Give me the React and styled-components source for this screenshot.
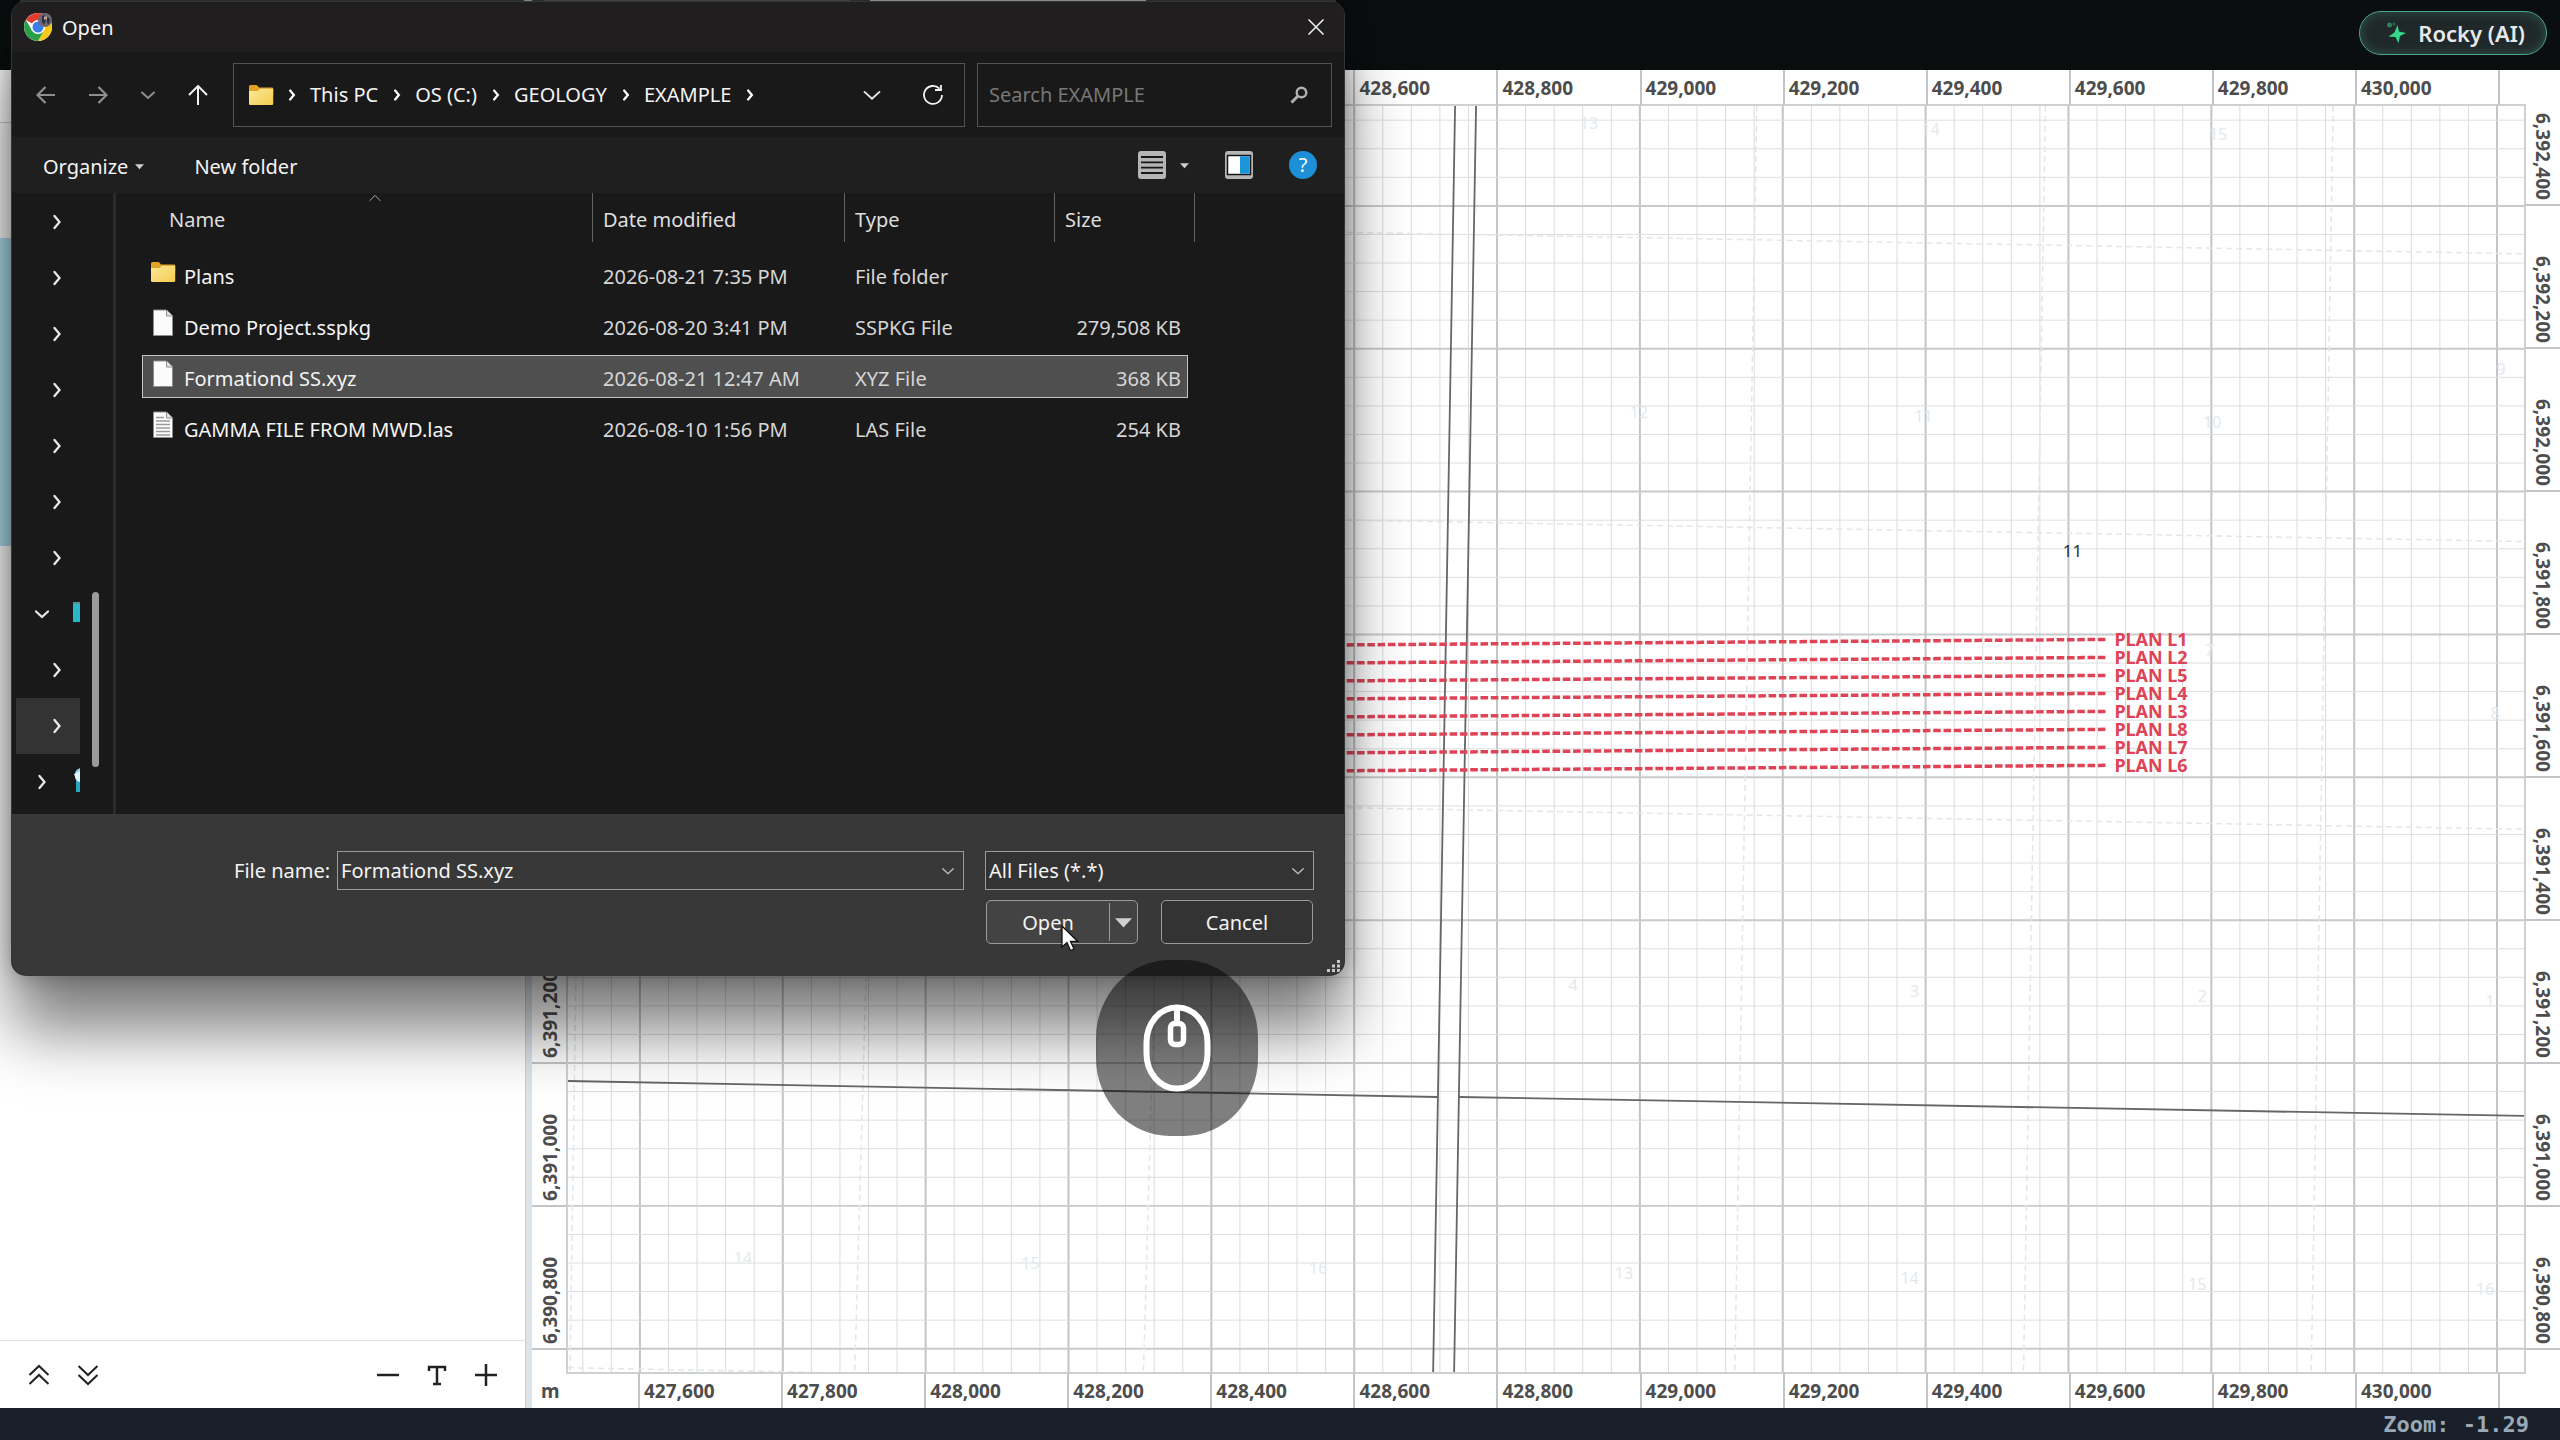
import React, { useState } from "react";
import styled, { createGlobalStyle, css } from "styled-components";

const eastings = ['427,600', '427,800', '428,000', '428,200', '428,400', '428,600', '428,800', '429,000', '429,200', '429,400', '429,600', '429,800', '430,000']
const northings = ['6,392,400', '6,392,200', '6,392,000', '6,391,800', '6,391,600', '6,391,400', '6,391,200', '6,391,000', '6,390,800']

const files = [
    { name: 'Plans', date: '2026-08-21 7:35 PM', type: 'File folder', size: '', icon: 'folder' },
    { name: 'Demo Project.sspkg', date: '2026-08-20 3:41 PM', type: 'SSPKG File', size: '279,508 KB', icon: 'file' },
    { name: 'Formationd SS.xyz', date: '2026-08-21 12:47 AM', type: 'XYZ File', size: '368 KB', icon: 'file' },
    { name: 'GAMMA FILE FROM MWD.las', date: '2026-08-10 1:56 PM', type: 'LAS File', size: '254 KB', icon: 'text' },
]

const treeRows = [
    {}, {}, {}, {}, {}, {}, {},
    { root: true, open: true, icon: 'pc' },
    {},
    { selected: true },
    { root: true, icon: 'network' },
]

const plans = ['L1', 'L2', 'L5', 'L4', 'L3', 'L8', 'L7', 'L6']

// section numbers, in plot coordinates
const sections = [
    ['13', 1022, 17], ['14', 1364, 23], ['15', 1652, 28],
    ['12', 1072, 306], ['11', 1357, 310], ['10', 1646, 316], ['9', 1935, 263],
    ['7', 1643, 545], ['8', 1929, 608],
    ['4', 1006, 880], ['3', 1348, 886], ['2', 1636, 891], ['1', 1924, 896],
    ['14', 175, 1153], ['15', 463, 1158], ['16', 751, 1163], ['13', 1057, 1168],
    ['14', 1343, 1173], ['15', 1631, 1179], ['16', 1919, 1184],
]

const faintLines = [
    [1190, 0, 1168, 1269], [1479, 0, 1457, 1269], [1767, 0, 1745, 1269],
    [306, 600, 287, 1269], [595, 600, 576, 1269], [12, 600, 2, 1269],
    [700, 125, 1958, 148], [700, 413, 1958, 436], [700, 701, 1958, 724],
    [0, 1263, 800, 1278],
]

const roadLines = [
    [888, 0, 866, 1269], [909, 0, 887, 1269],
    [0, 976, 870, 992], [892, 992, 1958, 1011],
]

const STEP = 143

function FolderIcon() {
    return (
        <svg width="26" height="22" viewBox="0 0 26 22">
            <path d="M1 2.5Q1 1 2.5 1H8q1 0 1.600.8L11 3.500H24q1.200 0 1.200 1.200V12H1z" fill="#e0a326" />
            <defs>
                <linearGradient id="folder" x1="0" y1="0" x2="1" y2="1">
                    <stop offset="0" stopColor="#fde79a" />
                    <stop offset="1" stopColor="#f3cd4d" />
                </linearGradient>
            </defs>
            <path d="M1 7H9.500L12 4.800H25.200V19.700Q25.200 21 24 21H2.200Q1 21 1 19.700z" fill="url(#folder)" />
        </svg>
    )
}

function FileIcon({ lined }) {
    return (
        <svg width="26" height="28" viewBox="0 0 26 28">
            <path d="M3.500 1H16.500L22.500 7V26.500H3.500z" fill="#fbfbfb" stroke="#8d8d8d" />
            <path d="M16.500 1V7H22.500" fill="#e4e4e4" stroke="#8d8d8d" />
            {lined && <path d="M6 6.500H14M6 10H20M6 13.500H20M6 17H20M6 20.500H20M6 24H20" stroke="#9a9a9a" strokeWidth="1.500" />}
        </svg>
    )
}

function Chevron({ dir = 'right', size = 16, color = '#e8e8e8', weight = 2 }) {
    const paths = {
        right: 'M5.500 2L10.500 8L5.500 14',
        down: 'M2 5.500L8 11L14 5.500',
        up: 'M2 11L8 5L14 11',
    }
    return (
        <svg width={size} height={size} viewBox="0 0 16 16" fill="none" stroke={color} strokeWidth={weight}>
            <path d={paths[dir]} strokeLinecap="round" />
        </svg>
    )
}

function Triangle({ size = 10, color = '#cfcfcf' }) {
    return (
        <svg width={size} height={size} viewBox="0 0 10 10">
            <path d="M0 2.500H10L5 8z" fill={color} />
        </svg>
    )
}

function ChromeIcon() {
    return (
        <svg width="28" height="28" viewBox="0 0 28 28">
            <circle cx="14" cy="14" r="14" fill="#fff" />
            <path d="M14 14L1.900 7A14 14 0 0 1 26.100 7H14z" fill="#e33b2e" />
            <path d="M14 7H26.100A14 14 0 0 1 14 28L20 17.500z" fill="#f9c916" />
            <path d="M14 28A14 14 0 0 1 1.900 7L8 17.500L14 21L20 17.500z" fill="#2b9f48" />
            <circle cx="14" cy="14" r="7" fill="#fff" />
            <circle cx="14" cy="14" r="5.500" fill="#3b7de8" />
            <circle cx="21" cy="7" r="7" fill="#6d6770" />
            <path d="M18 3L21 2L22 6L20 12L18 9zM23 4L26 6L25 11L23 10z" fill="#26304f" />
            <path d="M20 3.500h3v3h-3z" fill="#c9a58e" />
        </svg>
    )
}

function Plot() {
    const lines = []
    for (let i = -2; i <= 66; i++) {
        const x = 72 + i * STEP / 5
        lines.push(<line key={'v' + i} x1={x} x2={x} y1="0" y2="1269" stroke={i % 5 === 0 ? '#c3c4c6' : '#dadbdd'} strokeWidth={i % 5 === 0 ? 2 : 1} />)
    }
    for (let i = -3; i <= 40; i++) {
        const y = 100 + i * STEP / 5
        lines.push(<line key={'h' + i} y1={y} y2={y} x1="0" x2="1958" stroke={i % 5 === 0 ? '#c9cacc' : '#dddedf'} strokeWidth={i % 5 === 0 ? 2 : 1} />)
    }
    return (
        <PlotSvg viewBox="0 0 1958 1269" preserveAspectRatio="xMinYMin slice">
            {lines}
            {faintLines.map(([x1, y1, x2, y2], i) => (
                <line key={i} x1={x1} y1={y1} x2={x2} y2={y2} stroke="#e1e7ea" strokeWidth="1.500" strokeDasharray="6 4" />
            ))}
            {sections.map(([n, x, y]) => (
                <text key={n + x + y} className="faint" x={x} y={y + 6}>{n}</text>
            ))}
            {roadLines.map(([x1, y1, x2, y2], i) => (
                <line key={i} x1={x1} y1={y1} x2={x2} y2={y2} stroke="#66666a" strokeWidth="1.800" />
            ))}
            <text className="section" x="1506" y="451">11</text>
            {plans.map((p, i) => (
                <g key={p}>
                    <line x1="1539" y1={534 + i * 18} x2="0" y2={545 + i * 18} stroke="#de4456" strokeWidth="3.500" strokeDasharray="7.600 2.700" />
                    <text className="plan" x="1548" y={541 + i * 18}>PLAN {p}</text>
                </g>
            ))}
        </PlotSvg>
    )
}

function OpenDialog() {
    const [selected, setSelected] = useState('Formationd SS.xyz')
    const [search, setSearch] = useState('')

    return (
        <Dialog role="dialog" aria-label="Open">
            <TitleBar>
                <ChromeIcon />
                <h1>Open</h1>
                <IconButton aria-label="Close">
                    <svg width="16" height="16" viewBox="0 0 16 16" stroke="#f2f2f2" strokeWidth="1.500"><path d="M0.500 0.500L15.500 15.500M15.500 0.500L0.500 15.500" /></svg>
                </IconButton>
            </TitleBar>

            <NavBar>
                <NavButtons>
                    <IconButton aria-label="Back">
                        <svg width="20" height="20" viewBox="0 0 20 20" fill="none" stroke="#8f8f8f" strokeWidth="2.200"><path d="M19 10H2M9.500 2L1.500 10L9.500 18" /></svg>
                    </IconButton>
                    <IconButton aria-label="Forward">
                        <svg width="20" height="20" viewBox="0 0 20 20" fill="none" stroke="#8f8f8f" strokeWidth="2.200"><path d="M1 10H18M10.500 2L18.500 10L10.500 18" /></svg>
                    </IconButton>
                    <IconButton aria-label="Recent locations"><Chevron dir="down" color="#8f8f8f" /></IconButton>
                    <IconButton aria-label="Up">
                        <svg width="20" height="20" viewBox="0 0 20 20" fill="none" stroke="#f2f2f2" strokeWidth="2"><path d="M10 20V1.500M1 10L10 1L19 10" /></svg>
                    </IconButton>
                </NavButtons>
                <AddressBar>
                    <FolderIcon />
                    {['This PC', 'OS (C:)', 'GEOLOGY', 'EXAMPLE'].map(c => (
                        <React.Fragment key={c}>
                            <Chevron size={12} weight={3} color="#fff" />
                            <Crumb>{c}</Crumb>
                        </React.Fragment>
                    ))}
                    <Chevron size={12} weight={3} color="#fff" />
                    <AddressActions>
                        <IconButton aria-label="Previous locations"><Chevron dir="down" size={20} weight={1.5} /></IconButton>
                        <IconButton aria-label="Refresh">
                            <svg width="22" height="22" viewBox="0 0 22 22" fill="none" stroke="#f2f2f2" strokeWidth="1.800"><path d="M20 11A9 9 0 1 1 17.500 4.700M13 6H19V1" /></svg>
                        </IconButton>
                    </AddressActions>
                </AddressBar>
                <SearchBox>
                    <input type="text" aria-label="Search" placeholder="Search EXAMPLE" value={search} onChange={e => setSearch(e.target.value)} />
                    <svg width="18" height="18" viewBox="0 0 18 18" fill="none" stroke="#b0b0b0"><circle cx="11.500" cy="6.500" r="4.800" strokeWidth="2.400" /><path d="M8 10L1.500 16.500" strokeWidth="3" /></svg>
                </SearchBox>
            </NavBar>

            <Toolbar>
                <ToolButton>Organize <Triangle size={9} /></ToolButton>
                <ToolButton>New folder</ToolButton>
                <ToolIcons>
                    <IconButton aria-label="Change your view">
                        <svg width="28" height="28" viewBox="0 0 28 28"><rect width="28" height="28" rx="3" fill="#b5b5b5" /><path d="M3 6H25M3 11.300H25M3 16.600H25M3 22H25" stroke="#161616" strokeWidth="1.800" /></svg>
                    </IconButton>
                    <IconButton aria-label="More view options"><Triangle size={9} /></IconButton>
                    <IconButton aria-label="Show the preview pane">
                        <svg width="28" height="28" viewBox="0 0 28 28"><rect width="28" height="28" rx="3" fill="#b5b5b5" /><rect x="2.500" y="4.500" width="23" height="19" fill="#fff" stroke="#161616" strokeWidth="1.500" /><path d="M15 5.300H24.800V22.800H15z" fill="#1c95d8" /></svg>
                    </IconButton>
                    <HelpButton aria-label="Help">?</HelpButton>
                </ToolIcons>
            </Toolbar>

            <DialogBody>
                <Tree>
                    <TreeList>
                        {treeRows.map((r, i) => (
                            <TreeRow key={i} $root={r.root} $selected={r.selected}>
                                <Chevron dir={r.open ? 'down' : 'right'} size={16} weight={2.300} />
                                {r.icon === 'pc' && <svg width="7" height="24" viewBox="0 0 7 24"><rect width="7" height="20" fill="#28b7cb" /><rect width="7" height="2" fill="#5e8d96" /></svg>}
                                {r.icon === 'network' && <svg width="8" height="28" viewBox="0 0 8 28"><path d="M8 0A8 8 0 0 0 8 15z" fill="#8fd0ea" /><path d="M4 10H8V24H4z" fill="#2ba7c4" /><path d="M2 6L8 3V14L5 13z" fill="#dff4fb" /></svg>}
                            </TreeRow>
                        ))}
                    </TreeList>
                    <ScrollThumb />
                </Tree>
                <FileTable>
                    <thead>
                        <tr>
                            <th><SortMark><Chevron dir="up" size={14} weight={1} color="#bdbdbd" /></SortMark>Name</th>
                            <th>Date modified</th>
                            <th>Type</th>
                            <th>Size</th>
                        </tr>
                    </thead>
                    <tbody>
                        {files.map(f => (
                            <FileRow key={f.name} $selected={f.name === selected} onClick={() => setSelected(f.name)}>
                                <td>{f.icon === 'folder' ? <FolderIcon /> : <FileIcon lined={f.icon === 'text'} />}{f.name}</td>
                                <td>{f.date}</td>
                                <td>{f.type}</td>
                                <td>{f.size}</td>
                            </FileRow>
                        ))}
                    </tbody>
                </FileTable>
            </DialogBody>

            <DialogFooter>
                <FieldRow>
                    <label htmlFor="filename">File name:</label>
                    <ComboBox>
                        <input id="filename" type="text" value={selected} onChange={e => setSelected(e.target.value)} />
                        <Chevron dir="down" size={14} weight={1.5} color="#c4c4c4" />
                    </ComboBox>
                    <TypeSelect>
                        <select aria-label="File type" defaultValue="all">
                            <option value="all">All Files (*.*)</option>
                        </select>
                        <Chevron dir="down" size={14} weight={1.5} color="#c4c4c4" />
                    </TypeSelect>
                </FieldRow>
                <ButtonRow>
                    <SplitButton>
                        <button>Open</button>
                        <button aria-label="Open options"><Triangle size={17} /></button>
                    </SplitButton>
                    <CancelButton>Cancel</CancelButton>
                </ButtonRow>
                <Grip width="13" height="12" viewBox="0 0 13 12" fill="#c9c9c9"><path d="M10 0h3v3h-3zM5 4.500h3v3h-3zM10 4.500h3v3h-3zM0 9h3v3h-3zM5 9h3v3h-3zM10 9h3v3h-3z" /></Grip>
            </DialogFooter>
        </Dialog>
    )
}

function App() {
    return (
        <Page>
            <GlobalStyle />
            <Header>
                <RockyButton>
                    <svg width="20" height="24" viewBox="0 0 20 24" fill="#35d98d">
                        <path d="M11.500 4L13 10.500L20 12L14 15L12.500 22L9.500 16L2.500 15.500L8.500 11.500z" />
                        <circle cx="3.500" cy="4" r="2.500" opacity="0.500" />
                        <circle cx="8" cy="3" r="1.500" opacity="0.400" />
                    </svg>
                    Rocky (AI)
                </RockyButton>
            </Header>

            <Main>
                <SidePanel>
                    <PanelHead />
                    <PanelTools />
                    <PanelActive />
                    <PanelRest />
                    <PanelFooter>
                        <IconButton aria-label="Collapse all">
                            <svg width="22" height="22" viewBox="0 0 22 22" fill="none" stroke="#222" strokeWidth="2"><path d="M1.500 11L11 2L20.500 11M1.500 20L11 11L20.500 20" /></svg>
                        </IconButton>
                        <IconButton aria-label="Expand all">
                            <svg width="22" height="22" viewBox="0 0 22 22" fill="none" stroke="#222" strokeWidth="2"><path d="M1.500 2L11 11L20.500 2M1.500 11L11 20L20.500 11" /></svg>
                        </IconButton>
                        <Spacer />
                        <IconButton aria-label="Smaller text">
                            <svg width="22" height="22" viewBox="0 0 22 22" stroke="#222" strokeWidth="2.500"><path d="M0 11H22" /></svg>
                        </IconButton>
                        <IconButton aria-label="Text size">
                            <svg width="22" height="22" viewBox="0 0 22 22" fill="none" stroke="#222" strokeWidth="2.500"><path d="M3 7V3H19V7M11 3V20M7 20H15" /></svg>
                        </IconButton>
                        <IconButton aria-label="Larger text">
                            <svg width="22" height="22" viewBox="0 0 22 22" stroke="#222" strokeWidth="2.500"><path d="M0 11H22M11 0V22" /></svg>
                        </IconButton>
                    </PanelFooter>
                </SidePanel>
                <Splitter />
                <MapView>
                    <Ruler>
                        <Ticks>{eastings.map(e => <span key={e}>{e}</span>)}</Ticks>
                    </Ruler>
                    <MapMiddle>
                        <SideRuler $flip>{northings.map(n => <div key={n}><span>{n}</span></div>)}</SideRuler>
                        <PlotArea><Plot /></PlotArea>
                        <SideRuler>{northings.map(n => <div key={n}><span>{n}</span></div>)}</SideRuler>
                    </MapMiddle>
                    <Ruler>
                        <Unit>m</Unit>
                        <Ticks>{eastings.map(e => <span key={e}>{e}</span>)}</Ticks>
                    </Ruler>
                </MapView>
            </Main>

            <StatusBar>Zoom: -1.29</StatusBar>

            <OpenDialog />
            <ClickBadge>
                <svg width="70" height="90" viewBox="0 0 70 90" fill="none" stroke="#fff" strokeWidth="6">
                    <rect x="4.500" y="4.500" width="61" height="81" rx="30" ry="35" />
                    <path d="M35 4V20" />
                    <rect x="28.500" y="20.500" width="13" height="21" rx="4.500" strokeWidth="5.500" />
                </svg>
            </ClickBadge>
            <Pointer width="18" height="27" viewBox="0 0 18 27">
                <path d="M1 1V22L6 17.500L9.500 25.500L13 24L9.500 16.300H16.500z" fill="#fff" stroke="#111" strokeWidth="1.300" />
            </Pointer>
        </Page>
    )
}

export default App

const GlobalStyle = createGlobalStyle`
* { box-sizing: border-box; }
body {
    margin: 0;
    font-family: "Noto Sans", "Open Sans", sans-serif;
}
button, input, select {
    font: inherit;
    color: inherit;
    background: none;
    border: none;
    padding: 0;
    margin: 0;
    outline: none;
}
svg { display: block; flex-shrink: 0; }
`;

const Page = styled.div`
position: relative;
height: 100vh;
display: flex;
flex-direction: column;
background: #fff;
`;

/* the thin strip on top is the bottom edge of the browser tabs */
const Header = styled.header`
display: flex;
justify-content: flex-end;
align-items: flex-start;
height: 70px;
padding: 11px 13px;
background: linear-gradient(90deg, #0a0e0f 20px, #333638 20px 524px, #9aa0a4 524px 532px, #333638 532px 544px, #4b4c50 544px 850px, #333638 850px 870px, #a5a3a3 870px 1146px, #333638 1146px 1336px, #0a0e0f 1336px) 0 0 / 100% 2px no-repeat #0a0e0f;
`;

const RockyButton = styled.button`
display: flex;
align-items: center;
gap: 12px;
height: 44px;
padding: 0 21px 0 26px;
border: 1px solid #4aa784;
border-radius: 22px;
background: #20282a;
box-shadow: inset 0 0 12px rgba(74, 167, 132, 0.35);
color: #e6e9ec;
font-size: 22px;
font-weight: 600;
`;

const Main = styled.main`
flex: 1;
min-height: 0;
display: flex;
`;

const SidePanel = styled.aside`
width: 525px;
display: flex;
flex-direction: column;
background: #fff;
`;

const PanelHead = styled.div`
height: 53px;
border-bottom: 1px solid #c9cdd0;
`;

const PanelTools = styled.div`
height: 115px;
background: #fafafa;
`;

const PanelActive = styled.div`
height: 308px;
background: #aedcec;
`;

const PanelRest = styled.div`
flex: 1;
`;

const PanelFooter = styled.div`
display: flex;
align-items: center;
gap: 27px;
height: 68px;
padding: 0 28px;
border-top: 1px solid #dfe2e5;
`;

const Spacer = styled.div`
flex: 1;
`;

const Splitter = styled.div`
width: 7px;
background: #dde4e8;
border-left: 1px solid #c5d0d5;
`;

const MapView = styled.section`
flex: 1;
min-width: 0;
display: flex;
flex-direction: column;
color: #4d4d4d;
font-size: 19px;
font-weight: 700;
`;

const Ruler = styled.div`
position: relative;
display: flex;
height: 35px;
padding: 0 60px 0 106px;
`;

const Ticks = styled.div`
flex: 1;
display: flex;
border-right: 2px solid #c3c4c6;
span {
    flex: 1;
    padding-left: 4px;
    border-left: 2px solid #c3c4c6;
    line-height: 37px;
}
`;

const Unit = styled.span`
position: absolute;
left: 9px;
line-height: 37px;
`;

const MapMiddle = styled.div`
flex: 1;
min-height: 0;
display: flex;
`;

const SideRuler = styled.div`
width: 35px;
display: flex;
flex-direction: column;
padding-bottom: 23px;
div {
    flex: 1;
    display: flex;
    align-items: flex-end;
    justify-content: center;
    padding: 0 0 4px 1px;
    border-bottom: 2px solid #c3c4c6;
}
div:first-child {
    flex: 0 0 101px;
}
span {
    writing-mode: vertical-rl;
    line-height: 24px;
    ${({ $flip }) => $flip && css`transform: rotate(180deg);`}
}
`;

const PlotArea = styled.div`
flex: 1;
min-width: 0;
border: 2px solid #cfd0d2;
margin: -1px;
overflow: hidden;
`;

const PlotSvg = styled.svg`
width: 100%;
height: 100%;
.faint {
    font-size: 16px;
    font-weight: 400;
    fill: #e3e9ed;
    text-anchor: middle;
}
.section {
    font-size: 17px;
    font-weight: 400;
    fill: #333;
    text-anchor: middle;
}
.plan {
    font-size: 18px;
    font-weight: 700;
    fill: #de4456;
}
`;

const StatusBar = styled.footer`
display: flex;
justify-content: flex-end;
height: 32px;
padding: 0 31px;
background: #1a202a;
color: #9aa9b8;
font-family: "DejaVu Sans Mono", monospace;
font-size: 22px;
font-weight: 700;
line-height: 34px;
`;

const Dialog = styled.section`
position: absolute;
left: 12px;
top: 2px;
width: 1332px;
border-radius: 14px;
overflow: hidden;
background: #191919;
box-shadow: 0 0 0 1px #333638, 0 56px 64px rgba(0, 0, 0, 0.5), 0 0 24px rgba(0, 0, 0, 0.35);
color: #f4f4f4;
font-size: 20px;
`;

const IconButton = styled.button`
display: flex;
align-items: center;
justify-content: center;
`;

const TitleBar = styled.header`
display: flex;
align-items: center;
gap: 10px;
height: 50px;
padding: 0 20px 0 12px;
background: #211e20;
h1 {
    flex: 1;
    margin: 0;
    font-size: 20px;
    font-weight: 400;
}
`;

const NavBar = styled.nav`
display: flex;
align-items: center;
gap: 12px;
height: 85px;
padding: 0 12px 0 24px;
`;

const NavButtons = styled.div`
display: flex;
align-items: center;
justify-content: space-between;
width: 172px;
margin-right: 13px;
`;

const AddressBar = styled.div`
flex: 1;
display: flex;
align-items: center;
gap: 12px;
height: 64px;
padding: 0 20px 0 14px;
border: 1px solid #535353;
`;

const Crumb = styled.span`
line-height: 28px;
margin-right: 1px;
`;

const AddressActions = styled.div`
display: flex;
gap: 40px;
margin-left: auto;
`;

const SearchBox = styled.div`
display: flex;
align-items: center;
width: 355px;
height: 64px;
padding: 0 23px 0 11px;
border: 1px solid #535353;
input {
    flex: 1;
    min-width: 0;
}
input::placeholder {
    color: #777;
    opacity: 1;
}
`;

const Toolbar = styled.div`
display: flex;
align-items: center;
gap: 50px;
height: 56px;
padding: 0 27px 0 31px;
background: #1f1f1f;
`;

const ToolButton = styled.button`
display: flex;
align-items: center;
gap: 7px;
padding-top: 2px;
`;

const ToolIcons = styled.div`
display: flex;
align-items: center;
gap: 36px;
margin-left: auto;
button:nth-child(2) {
    margin-left: -22px;
}
`;

const HelpButton = styled.button`
width: 28px;
height: 28px;
border-radius: 50%;
background: #1c8fd6;
color: #fff;
font-size: 20px;
line-height: 28px;
text-align: center;
`;

const DialogBody = styled.div`
display: flex;
height: 621px;
`;

const Tree = styled.div`
display: flex;
justify-content: space-between;
width: 104px;
padding: 1px 14px 0 4px;
border-right: 3px solid #2b2b2b;
`;

const TreeList = styled.div`
width: 64px;
`;

const TreeRow = styled.div`
display: flex;
align-items: center;
justify-content: space-between;
height: 56px;
padding-left: ${({ $root }) => $root ? '18px' : '33px'};
background: ${({ $selected }) => $selected ? '#333' : 'transparent'};
`;

const ScrollThumb = styled.div`
width: 7px;
height: 175px;
margin-top: 398px;
border-radius: 4px;
background: #9b9b9b;
`;

const FileTable = styled.table`
display: block;
margin-left: 26px;
thead, tbody {
    display: grid;
    gap: 8px;
}
tr {
    display: grid;
    grid-template-columns: 451px 252px 210px 140px;
}
th {
    position: relative;
    height: 49px;
    padding: 0 0 0 10px;
    border-right: 1px solid #636363;
    font-weight: 400;
    line-height: 54px;
    text-align: left;
    color: #dedede;
}
th:first-child {
    padding-left: 27px;
}
thead {
    margin-bottom: 11px;
}
`;

const SortMark = styled.span`
position: absolute;
left: 226px;
top: -2px;
`;

const FileRow = styled.tr`
width: 1046px;
background: ${({ $selected }) => $selected ? '#4f4f4f' : 'transparent'};
outline: ${({ $selected }) => $selected ? '1px solid #c4c4c4' : 'none'};
outline-offset: -1px;
&& {
    grid-template-columns: 451px 252px 210px 133px;
}
td {
    display: flex;
    align-items: center;
    gap: 8px;
    height: 43px;
    padding: 3px 7px 0 10px;
    color: #d6d6d6;
}
td:first-child {
    padding-left: 8px;
    color: #f4f4f4;
}
td:first-child svg {
    margin-bottom: 8px;
}
td:last-child {
    justify-content: flex-end;
}
`;

const DialogFooter = styled.footer`
position: relative;
height: 161px;
padding: 37px 30px 0 222px;
background: #383838;
`;

const FieldRow = styled.div`
display: flex;
align-items: center;
height: 39px;
label {
    width: 103px;
}
`;

const ComboBox = styled.div`
flex: 1;
display: flex;
align-items: center;
height: 39px;
padding: 0 8px 0 3px;
border: 1px solid #9b9b9b;
input {
    flex: 1;
    min-width: 0;
}
`;

const TypeSelect = styled.div`
display: flex;
align-items: center;
width: 329px;
height: 39px;
margin-left: 21px;
padding: 0 8px 0 3px;
border: 1px solid #9b9b9b;
background: #333;
select {
    flex: 1;
    appearance: none;
}
option {
    color: #000;
}
`;

const ButtonRow = styled.div`
display: flex;
justify-content: flex-end;
gap: 23px;
margin: 10px 1px 0 0;
`;

const SplitButton = styled.div`
display: flex;
align-items: center;
width: 152px;
height: 44px;
border: 1px solid #9b9b9b;
border-radius: 5px;
background: #434343;
button {
    height: 38px;
}
button:first-child {
    flex: 1;
    border-right: 1px solid #9b9b9b;
}
button:last-child {
    width: 27px;
    padding-left: 5px;
}
`;

const CancelButton = styled.button`
width: 152px;
height: 44px;
border: 1px solid #9b9b9b;
border-radius: 5px;
background: #333;
`;

const Grip = styled.svg`
position: absolute;
right: 4px;
bottom: 3px;
`;

const ClickBadge = styled.div`
position: absolute;
left: 1096px;
top: 960px;
display: flex;
align-items: center;
justify-content: center;
width: 162px;
height: 176px;
border-radius: 74px / 78px;
background: rgba(0, 0, 0, 0.5);
`;

const Pointer = styled.svg`
position: absolute;
left: 1061px;
top: 925px;
`;
